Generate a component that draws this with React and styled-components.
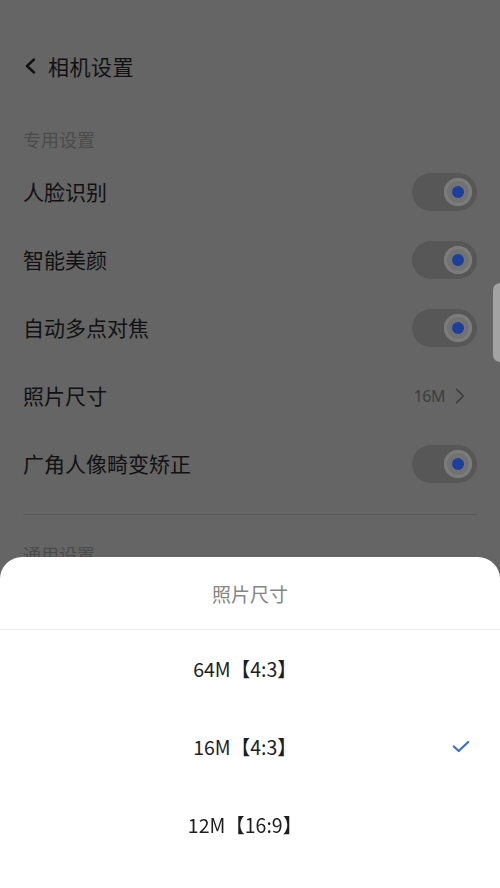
import React from "react";
import styled, { createGlobalStyle } from "styled-components";

const GlobalStyle = createGlobalStyle`
  html, body {
    margin: 0;
    padding: 0;
    background: #656565;
  }
  body {
    font-family: "Noto Sans CJK SC", "Noto Sans", sans-serif;
    -webkit-font-smoothing: antialiased;
  }
`;

const settings = [
  { label: "人脸识别", type: "toggle" },
  { label: "智能美颜", type: "toggle" },
  { label: "自动多点对焦", type: "toggle" },
  { label: "照片尺寸", type: "value", value: "16M" },
  { label: "广角人像畸变矫正", type: "toggle" },
];

const sizes = [
  { label: "64M【4:3】", checked: false },
  { label: "16M【4:3】", checked: true },
  { label: "12M【16:9】", checked: false },
];

const App = () => {
  return (
    <>
      <GlobalStyle />
      <Page>
        <Header>
          <BackIcon viewBox="0 0 12 16">
            <path d="M10 1.5 L3 8 L10 14.5" />
          </BackIcon>
          <Title>相机设置</Title>
        </Header>

        <SectionLabel>专用设置</SectionLabel>
        {settings.map((item) => (
          <Row key={item.label}>
            <RowLabel>{item.label}</RowLabel>
            {item.type === "toggle" ? (
              <Toggle>
                <Knob>
                  <Dot />
                </Knob>
              </Toggle>
            ) : (
              <ValueBox>
                <Value>{item.value}</Value>
                <Chevron viewBox="0 0 12 20">
                  <path d="M2 2 L10 10 L2 18" />
                </Chevron>
              </ValueBox>
            )}
          </Row>
        ))}
        <Divider />
        <SectionLabel second>通用设置</SectionLabel>
      </Page>

      <ScrollHandle />

      <Sheet>
        <SheetTitle>照片尺寸</SheetTitle>
        <SheetDivider />
        {sizes.map((s) => (
          <Option key={s.label}>
            <OptionText>{s.label}</OptionText>
            {s.checked && (
              <Check viewBox="0 0 20 14">
                <path d="M2 7 L7.5 12 L18 2" />
              </Check>
            )}
          </Option>
        ))}
      </Sheet>
    </>
  );
};

export default App;

const Page = styled.div`
  width: 500px;
  height: 888px;
  overflow: hidden;
  background: #656565;
  padding: 0 23px;
  box-sizing: border-box;
`;

const Header = styled.div`
  display: flex;
  align-items: center;
  height: 46px;
  margin-top: 43px;
`;

const BackIcon = styled.svg`
  width: 12px;
  height: 16px;
  margin-left: 1px;
  margin-right: 12px;
  fill: none;
  stroke: #111;
  stroke-width: 2.4;
  stroke-linecap: round;
  stroke-linejoin: round;
`;

const Title = styled.div`
  font-size: 21px;
  color: #111;
  letter-spacing: 0.5px;
`;

const SectionLabel = styled.div`
  height: 38px;
  line-height: 38px;
  margin-top: ${({ second }) => (second ? "20px" : "31px")};
  font-size: 18px;
  color: #4b4b4b;
`;

const Row = styled.div`
  display: flex;
  align-items: center;
  justify-content: space-between;
  height: 68px;
`;

const RowLabel = styled.div`
  font-size: 21px;
  color: #111;
  margin-top: -2px;
`;

const Toggle = styled.div`
  display: flex;
  align-items: center;
  justify-content: flex-end;
  width: 65px;
  height: 38px;
  border-radius: 19px;
  background: #575757;
  padding: 0 5px;
  box-sizing: border-box;
`;

const Knob = styled.div`
  display: flex;
  align-items: center;
  justify-content: center;
  width: 28px;
  height: 28px;
  border-radius: 50%;
  background: #727272;
  box-shadow: inset 0 0 0 3px #7c7c7c;
`;

const Dot = styled.div`
  width: 12px;
  height: 12px;
  border-radius: 50%;
  background: #1d3f9c;
`;

const ValueBox = styled.div`
  display: flex;
  align-items: center;
  gap: 10px;
  padding-right: 12px;
`;

const Value = styled.div`
  font-size: 16px;
  color: #3e3e3e;
  font-family: "Noto Sans", sans-serif;
  letter-spacing: -0.5px;
`;

const Chevron = styled.svg`
  width: 10px;
  height: 18px;
  fill: none;
  stroke: #3e3e3e;
  stroke-width: 2;
  stroke-linecap: round;
  stroke-linejoin: round;
`;

const Divider = styled.div`
  height: 1px;
  margin-top: 16px;
  background: #5a5a5a;
`;

const ScrollHandle = styled.div`
  position: fixed;
  right: 0;
  top: 283px;
  width: 7px;
  height: 79px;
  border-radius: 7px 0 0 7px;
  background: #a3a3a3;
`;

const Sheet = styled.div`
  position: fixed;
  left: 0;
  bottom: 0;
  width: 500px;
  height: 331px;
  background: #fff;
  border-radius: 22px 22px 0 0;
  display: flex;
  flex-direction: column;
`;

const SheetTitle = styled.div`
  height: 72px;
  display: flex;
  align-items: center;
  justify-content: center;
  font-size: 19px;
  color: #858585;
`;

const SheetDivider = styled.div`
  height: 1px;
  background: #ececec;
`;

const Option = styled.div`
  position: relative;
  height: 78px;
  display: flex;
  align-items: center;
  justify-content: center;
`;

const OptionText = styled.div`
  font-size: 19.5px;
  color: #1e1e1e;
  margin-right: 10px;
  margin-top: -2px;
`;

const Check = styled.svg`
  position: absolute;
  right: 30px;
  top: 50%;
  margin-top: -7px;
  width: 18px;
  height: 13px;
  fill: none;
  stroke: #3b6fd6;
  stroke-width: 2.5;
  stroke-linecap: round;
  stroke-linejoin: round;
`;
